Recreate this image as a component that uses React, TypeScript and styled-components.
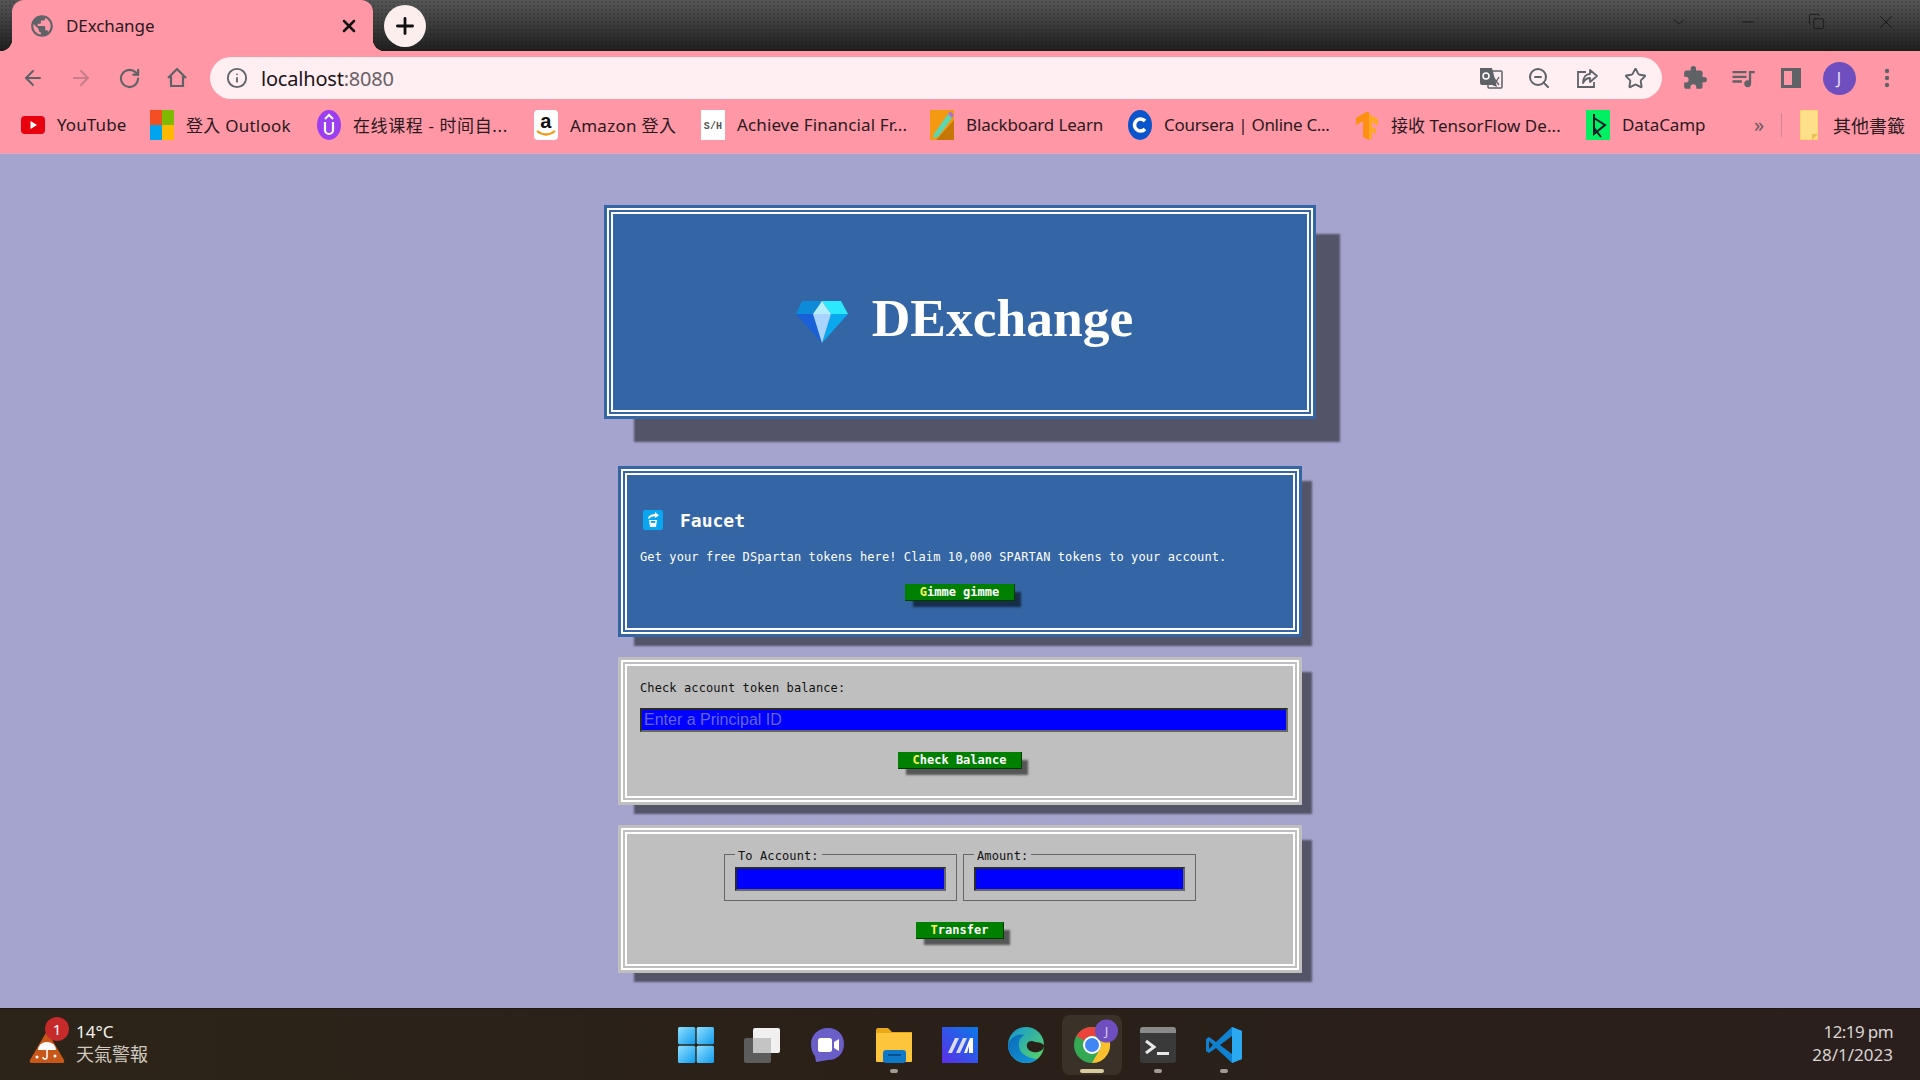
import React from "react";
import styled, { createGlobalStyle } from "styled-components";
import { ArrowLeft, ArrowRight, RotateCw, Info, ZoomOut, Star, X, Plus, ChevronDown, Minus, Copy } from "lucide-react";
import { MdExtension, MdQueueMusic, MdPublic } from "react-icons/md";

const PINK = "#ff97a6";
const UI_FONT = `"Noto Sans", "Noto Sans CJK TC", sans-serif`;
const MONO = `"DejaVu Sans Mono", "Liberation Mono", monospace`;

const Global = createGlobalStyle`
  html, body { margin: 0; padding: 0; height: 100%; overflow: hidden; background: #a5a4cf; }
  #root { height: 100%; }
  * { box-sizing: border-box; }
`;

const Screen = styled.div`
  width: 1920px;
  height: 1080px;
  display: flex;
  flex-direction: column;
  overflow: hidden;
  font-family: ${UI_FONT};
`;

const TitleBar = styled.header`
  height: 51px;
  flex: none;
  display: flex;
  align-items: flex-end;
  padding-left: 12px;
  background-color: #333;
  background-image: radial-gradient(rgba(0, 0, 0, 0.14) 1px, transparent 1px), linear-gradient(#565656, #1f1f1f);
  background-size: 4px 4px, 100% 100%;
`;

const Tab = styled.div`
  position: relative;
  width: 361px;
  height: 51px;
  display: flex;
  align-items: center;
  gap: 11px;
  padding: 0 14px 0 17px;
  background: ${PINK};
  border-radius: 12px 12px 0 0;
  color: #2a1a1e;
  font-size: 17px;
  letter-spacing: -0.1px;
  &::before, &::after {
    content: "";
    position: absolute;
    bottom: 0;
    width: 12px;
    height: 12px;
  }
  &::before { left: -12px; background: radial-gradient(circle at 0 0, transparent 12px, ${PINK} 12.5px); }
  &::after { right: -12px; background: radial-gradient(circle at 100% 0, transparent 12px, ${PINK} 12.5px); }
`;

const TabTitle = styled.span`
  flex: 1;
`;

const NewTab = styled.div`
  width: 42px;
  height: 42px;
  margin: 0 0 4px 11px;
  border-radius: 50%;
  background: #fdeeee;
  color: #111;
  display: flex;
  align-items: center;
  justify-content: center;
`;

const WindowControls = styled.div`
  margin-left: auto;
  align-self: stretch;
  display: flex;
  align-items: center;
  padding: 0 0 8px 0;
  color: #111;
`;

const WindowButton = styled.div`
  width: 69px;
  display: flex;
  justify-content: center;
`;

const Toolbar = styled.div`
  height: 48px;
  flex: none;
  display: flex;
  align-items: flex-start;
  padding: 6px 9px 0;
  background: ${PINK};
`;

const ToolIcon = styled.div<{ $faded?: boolean }>`
  width: 48px;
  height: 42px;
  flex: none;
  display: flex;
  align-items: center;
  justify-content: center;
  color: ${(p) => (p.$faded ? "#c87d8a" : "#5f6368")};
`;

const Omnibox = styled.div`
  flex: 1;
  height: 42px;
  margin: 0 9px;
  padding: 0 3px 0 16px;
  display: flex;
  align-items: center;
  border-radius: 21px;
  background: #ffeef2;
  color: #5f6368;
`;

const Url = styled.div`
  flex: 1;
  margin-left: 13px;
  font-size: 20px;
  letter-spacing: -0.2px;
  color: #6b6166;
  span { color: #1c1416; }
`;

const Avatar = styled.div`
  width: 33px;
  height: 33px;
  border-radius: 50%;
  background: #6f4fbf;
  color: #e8e0f8;
  font-size: 16px;
  display: flex;
  align-items: center;
  justify-content: center;
`;

const BookmarksBar = styled.nav`
  height: 55px;
  flex: none;
  display: flex;
  align-items: center;
  padding: 0 15px 3px 21px;
  background: ${PINK};
  border-bottom: 1px solid #e4a9c0;
`;

const Bookmark = styled.div<{ $w: number; $ls?: number }>`
  width: ${(p) => p.$w}px;
  flex: none;
  display: flex;
  align-items: center;
  gap: 12px;
  font-size: 17px;
  letter-spacing: ${(p) => p.$ls ?? 0}px;
  color: #2a1a1e;
  white-space: nowrap;
`;

const FolderBookmark = styled(Bookmark)`
  gap: 15px;
  font-size: 18px;
`;

const Overflow = styled.div`
  width: 34px;
  margin-left: 38px;
  color: #6b5a60;
  font-size: 20px;
`;

const Separator = styled.div`
  width: 1px;
  height: 24px;
  margin-right: 18px;
  background: #d08494;
`;

const Page = styled.main`
  flex: 1;
  display: flex;
  flex-direction: column;
  align-items: center;
  padding-top: 51px;
  background: #a5a4cf;
`;

const Card = styled.section<{ $gray?: boolean; $w: number; $sx: number }>`
  width: ${(p) => p.$w}px;
  padding: 3px;
  background: ${(p) => (p.$gray ? "#bfbfbf" : "#3465a4")};
  box-shadow: ${(p) => p.$sx}px ${(p) => p.$sx - 1}px 2px -3px #545469;
  & + & { margin-top: 20px; }
`;

const HeaderCard = styled(Card)`
  margin-bottom: 27px;
`;

const CardInner = styled.div`
  border: 6px double #fff;
  padding: 13px 13px 27px;
`;

const FaucetInner = styled(CardInner)`
  padding-top: 35px;
`;

const TransferInner = styled(CardInner)`
  padding-top: 11px;
  padding-bottom: 25px;
`;

const HeaderInner = styled.div`
  height: 208px;
  padding: 20px 0 0 9px;
  border: 6px double #fff;
  display: flex;
  align-items: center;
  justify-content: center;
  gap: 24px;
`;

const Logo = styled.h1`
  margin: 0 0 9px;
  font-family: "Liberation Serif", serif;
  font-weight: 700;
  font-size: 53.5px;
  line-height: 60px;
  color: #fff;
`;

const FaucetHeading = styled.h2`
  margin: 0 0 0 3px;
  height: 20px;
  display: flex;
  align-items: center;
  gap: 17px;
  font-family: ${MONO};
  font-size: 18px;
  font-weight: 700;
  color: #fff;
`;

const Line = styled.p<{ $light?: boolean }>`
  margin: 0;
  font-family: ${MONO};
  font-size: 12px;
  letter-spacing: 0.105px;
  line-height: 18px;
  color: ${(p) => (p.$light ? "#fff" : "#111")};
`;

const FaucetLine = styled(Line)`
  margin-top: 18px;
`;

const Actions = styled.div<{ $top: number }>`
  display: flex;
  justify-content: center;
  margin-top: ${(p) => p.$top}px;
`;

const GreenButton = styled.button`
  height: 17px;
  padding: 1px 15px 0;
  border: 0;
  border-right: 1px solid #003c00;
  border-bottom: 1px solid #003c00;
  background: #008000;
  color: #fff;
  font-family: ${MONO};
  font-size: 12px;
  font-weight: 700;
  line-height: 15px;
  box-shadow: 7px 7px 2px -1px rgba(0, 0, 0, 0.55);
  span { color: #ffff55; }
`;

const Field = styled.input<{ $wide?: boolean }>`
  display: block;
  width: ${(p) => (p.$wide ? "648px" : "211px")};
  height: 24px;
  margin-top: ${(p) => (p.$wide ? "11px" : "0")};
  padding: 0 2px;
  border: 2px solid;
  border-color: #2a2a2a #666 #666 #2a2a2a;
  background: #0000ff;
  color: #fff;
  font-family: "Liberation Sans", Arial, sans-serif;
  font-size: 16px;
  outline: none;
  &::placeholder { color: #6565dd; opacity: 1; }
`;

const FieldRow = styled.div`
  display: flex;
  justify-content: center;
  gap: 6px;
`;

const Group = styled.fieldset`
  width: 233px;
  margin: 0;
  padding: 4px 10px 9px;
  border: 1px solid #666;
`;

const Caption = styled.legend`
  margin-left: 0;
  padding: 4px 3px 0;
  font-family: ${MONO};
  font-size: 12px;
  letter-spacing: 0.105px;
  line-height: 14px;
  color: #111;
`;

const Taskbar = styled.footer`
  height: 72px;
  flex: none;
  display: grid;
  grid-template-columns: 1fr auto 1fr;
  align-items: center;
  background: linear-gradient(90deg, #2c2419, #2a2019 50%, #2a1f1c);
  border-top: 1px solid #1f1812;
`;

const Weather = styled.div`
  display: flex;
  align-items: center;
  gap: 11px;
  padding-left: 29px;
`;

const WeatherIcon = styled.div`
  position: relative;
  width: 36px;
  height: 34px;
  margin-top: 4px;
`;

const Badge = styled.div`
  position: absolute;
  top: -13px;
  left: 16px;
  width: 24px;
  height: 24px;
  border-radius: 50%;
  background: #c62a2a;
  color: #fff;
  font-size: 15px;
  line-height: 24px;
  text-align: center;
`;

const WeatherText = styled.div`
  margin-top: -4px;
  font-size: 17px;
  line-height: 23px;
  color: #f2f0ec;
  small { display: block; font-size: 18px; color: #cfc9c0; }
`;

const Dock = styled.div`
  display: flex;
  align-items: center;
`;

const DockSlot = styled.div<{ $active?: boolean }>`
  position: relative;
  width: 66px;
  height: 60px;
  display: flex;
  align-items: center;
  justify-content: center;
  border-left: 3px solid transparent;
  border-right: 3px solid transparent;
  border-radius: 9px;
  background: ${(p) => (p.$active ? "#3a3128" : "transparent")};
  background-clip: padding-box;
`;

const Dot = styled.i<{ $wide?: boolean }>`
  position: absolute;
  bottom: 2px;
  left: 50%;
  width: ${(p) => (p.$wide ? "24px" : "8px")};
  height: 4px;
  margin-left: ${(p) => (p.$wide ? "-12px" : "-4px")};
  border-radius: 2px;
  background: ${(p) => (p.$wide ? "#d8cba0" : "#a09a92")};
`;

const Clock = styled.div`
  justify-self: end;
  margin-top: -4px;
  padding-right: 27px;
  text-align: right;
  font-size: 17px;
  line-height: 23px;
  color: #d8d5d2;
  span { letter-spacing: -0.6px; }
`;

const Diamond = () => (
  <svg width="52" height="42" viewBox="0 0 52 42">
    <polygon points="6,0 26,0 17,13 0,13" fill="#0d8ad8" />
    <polygon points="26,0 45,0 52,13 35,13" fill="#2be8ff" />
    <polygon points="0,13 17,13 26,42" fill="#1a60d8" />
    <polygon points="52,13 35,13 26,42" fill="#0aa8ee" />
    <polygon points="26,0 35,13 17,13" fill="#b4eeff" />
    <polygon points="17,13 35,13 26,42" fill="#a8d4ff" />
  </svg>
);

const FaucetIcon = () => (
  <svg width="20" height="20" viewBox="0 0 20 20">
    <rect width="20" height="20" rx="2" fill="#0aa6ef" />
    <path d="M5 8 C6 5 9 4 12 4 L12 2 L16 5.5 L12 8 L12 6.5 C9 6.5 7 7 6 9 Z" fill="#fff" />
    <path d="M6 10 L14 10 L13 17 L7 17 Z" fill="#fff" />
    <path d="M7.5 11 L12.5 11 L12 13 L8 13 Z" fill="#0aa6ef" />
  </svg>
);

const HomeIcon = () => (
  <svg width="24" height="24" viewBox="0 0 24 24" fill="none" stroke="currentColor" strokeWidth="2.2">
    <path d="M3 12 L12 3 L21 12 M6 10 V20 H18 V10" strokeLinejoin="miter" />
  </svg>
);

const TranslateIcon = () => (
  <svg width="24" height="24" viewBox="0 0 24 24">
    <rect x="9" y="5" width="14" height="17" rx="1" fill="none" stroke="#5f6368" strokeWidth="1.5" />
    <path d="M1 2 H13 L18 21 L13 19 H3 a2 2 0 0 1 -2 -2 Z" fill="#5f6368" />
    <circle cx="7" cy="10" r="3" fill="none" stroke="#fff" strokeWidth="1.5" />
    <path d="M14 11 L20 19 M20 11 L15 19" stroke="#5f6368" strokeWidth="1.4" />
  </svg>
);

const ShareIcon = () => (
  <svg width="24" height="24" viewBox="0 0 24 24" fill="none" stroke="currentColor" strokeWidth="1.8">
    <path d="M11 6 H3 V21 H19 V16" />
    <path d="M8 17 C8 11 11 8 15 8 V4 L22 10 L15 16 V12 C12 12 10 13 8 17 Z" strokeLinejoin="round" />
  </svg>
);

const SidebarIcon = () => (
  <svg width="22" height="22" viewBox="0 0 22 22">
    <path fillRule="evenodd" d="M1 1 H21 V21 H1 Z M4 4 V18 H12 V4 Z" fill="#5f6368" />
  </svg>
);

const MenuIcon = () => (
  <svg width="24" height="24" viewBox="0 0 24 24" fill="#5f6368">
    <circle cx="12" cy="5" r="2.2" />
    <circle cx="12" cy="12" r="2.2" />
    <circle cx="12" cy="19" r="2.2" />
  </svg>
);

const YouTubeIcon = () => (
  <svg width="24" height="24" viewBox="0 0 24 24">
    <rect y="3" width="24" height="18" rx="4" fill="#e8000f" />
    <polygon points="9.5,8 16,12 9.5,16" fill="#fff" />
  </svg>
);

const MicrosoftIcon = () => (
  <svg width="24" height="30" viewBox="0 0 24 30">
    <rect width="12" height="15" fill="#f25022" />
    <rect x="12" width="12" height="15" fill="#7fba00" />
    <rect y="15" width="12" height="15" fill="#00a4ef" />
    <rect x="12" y="15" width="12" height="15" fill="#ffb900" />
  </svg>
);

const UdacityIcon = () => (
  <svg width="24" height="30" viewBox="0 0 24 30">
    <ellipse cx="12" cy="15" rx="12" ry="15" fill="#9b3ff0" />
    <path d="M8 12 V20 a4 4 0 0 0 8 0 V12" fill="none" stroke="#fff" strokeWidth="2.2" />
    <path d="M8 9 L12 5 L16 9" fill="none" stroke="#fff" strokeWidth="2" />
  </svg>
);

const AmazonIcon = () => (
  <svg width="24" height="30" viewBox="0 0 24 30">
    <rect width="24" height="30" rx="4" fill="#fff" />
    <text x="12" y="18" textAnchor="middle" fontFamily="Liberation Sans" fontWeight="700" fontSize="20" fill="#111">a</text>
    <path d="M3 21 Q12 28 21 21" fill="none" stroke="#f39a12" strokeWidth="2.2" />
  </svg>
);

const SHIcon = () => (
  <svg width="24" height="30" viewBox="0 0 24 30">
    <rect width="24" height="30" fill="#fff" />
    <text x="12" y="19" textAnchor="middle" fontFamily="Liberation Mono" fontSize="10" fontWeight="700" fill="#555">S/H</text>
  </svg>
);

const BlackboardIcon = () => (
  <svg width="24" height="30" viewBox="0 0 24 30">
    <rect width="24" height="30" fill="#f39a12" />
    <polygon points="24,10 24,30 6,30" fill="#c77708" />
    <polygon points="4,24 18,4 22,8 8,27 3,28" fill="#5cd6b0" />
    <polygon points="18,4 20,1 24,5 22,8" fill="#b070d0" />
  </svg>
);

const CourseraIcon = () => (
  <svg width="24" height="30" viewBox="0 0 24 30">
    <ellipse cx="12" cy="15" rx="12" ry="15" fill="#0b55cc" />
    <path d="M17 11 a6 6 0 1 0 0 8" fill="none" stroke="#fff" strokeWidth="3.6" />
  </svg>
);

const TensorFlowIcon = () => (
  <svg width="24" height="30" viewBox="0 0 24 30">
    <polygon points="11,2 1,8 1,15 8,11 8,27 14,30 14,2" fill="#ff8f12" />
    <polygon points="14,4 23,9 23,16 17,12 17,17 21,19 21,24 17,22 17,28 14,30" fill="#ffa726" />
  </svg>
);

const DataCampIcon = () => (
  <svg width="24" height="30" viewBox="0 0 24 30">
    <rect width="24" height="30" fill="#03ef62" />
    <path d="M8 4 V24 L19 15 L8 8 M8 18 L15 27" fill="none" stroke="#05192d" strokeWidth="2" />
  </svg>
);

const FolderIcon = () => (
  <svg width="18" height="30" viewBox="0 0 18 30">
    <rect width="18" height="30" rx="1" fill="#ffe08a" stroke="#f5cc50" />
    <path d="M12 30 L18 24 H12 Z" fill="#e8c050" />
  </svg>
);

const WeatherTriangle = () => (
  <svg width="36" height="34" viewBox="0 0 36 34">
    <path d="M18 1 L35 30 a2 2 0 0 1 -2 3 H3 a2 2 0 0 1 -2 -3 Z" fill="#c8581a" />
    <path d="M9 20 a9 8 0 0 1 18 0 Z" fill="#fff" />
    <path d="M18 20 V27 a2 2 0 0 1 -4 0" fill="none" stroke="#fff" strokeWidth="1.5" />
    <circle cx="8" cy="27" r="1.5" fill="#fff" />
    <circle cx="26" cy="26" r="1.5" fill="#fff" />
  </svg>
);

const WindowsLogo = () => (
  <svg width="36" height="36" viewBox="0 0 36 36">
    <defs>
      <linearGradient id="win" x1="0" y1="0" x2="1" y2="1">
        <stop offset="0" stopColor="#8fe0ff" />
        <stop offset="1" stopColor="#0f9cec" />
      </linearGradient>
    </defs>
    <rect width="17.3" height="17.3" rx="1.5" fill="url(#win)" />
    <rect x="18.7" width="17.3" height="17.3" rx="1.5" fill="url(#win)" />
    <rect y="18.7" width="17.3" height="17.3" rx="1.5" fill="url(#win)" />
    <rect x="18.7" y="18.7" width="17.3" height="17.3" rx="1.5" fill="url(#win)" />
  </svg>
);

const TaskViewIcon = () => (
  <svg width="36" height="36" viewBox="0 0 36 36">
    <rect x="9" y="1" width="27" height="25" rx="2" fill="#f0f0f0" />
    <rect y="11" width="27" height="25" rx="2" fill="#5c5c5c" />
    <rect x="9" y="11" width="18" height="15" fill="#c4c4c4" />
  </svg>
);

const ChatIcon = () => (
  <svg width="36" height="36" viewBox="0 0 36 36">
    <path d="M18 1 C28 1 34 8 34 17 C34 27 27 33 18 33 L6 35 L5 29 C2 26 1 21 1 17 C1 8 8 1 18 1 Z" fill="#6a5fc8" />
    <rect x="8" y="11" width="14" height="14" rx="2.5" fill="#fff" />
    <path d="M24 15 L29 12 V24 L24 21 Z" fill="#fff" />
  </svg>
);

const ExplorerIcon = () => (
  <svg width="36" height="36" viewBox="0 0 36 36">
    <path d="M0 3 a2 2 0 0 1 2 -2 H12 L16 5 H36 V34 H0 Z" fill="#e8a818" />
    <rect y="6" width="36" height="29" rx="1" fill="#fcc53c" />
    <rect x="7" y="23" width="23" height="13" rx="3" fill="#0f78c8" />
    <rect x="12" y="27" width="13" height="2" fill="#0a4f8f" />
  </svg>
);

const MatlabIcon = () => (
  <svg width="36" height="36" viewBox="0 0 36 36">
    <defs>
      <linearGradient id="mat" x1="0" y1="1" x2="1" y2="0">
        <stop offset="0" stopColor="#5b2ee8" />
        <stop offset="1" stopColor="#0a7ae8" />
      </linearGradient>
    </defs>
    <rect width="36" height="36" fill="url(#mat)" />
    <polygon points="6,26 13,11 17,11 10,26" fill="#dcdcff" />
    <polygon points="14,26 21,11 25,11 18,26" fill="#dcdcff" />
    <polygon points="22,26 28,11 31,11 31,26 27,26 27,19 25,26" fill="#fff" />
  </svg>
);

const EdgeIcon = () => (
  <svg width="36" height="36" viewBox="0 0 36 36">
    <defs>
      <linearGradient id="edgeA" x1="0" y1="0" x2="1" y2="1">
        <stop offset="0" stopColor="#0c6bb8" />
        <stop offset="1" stopColor="#1296d8" />
      </linearGradient>
      <linearGradient id="edgeB" x1="0" y1="0" x2="1" y2="1">
        <stop offset="0" stopColor="#1296d8" />
        <stop offset="1" stopColor="#5fd85c" />
      </linearGradient>
    </defs>
    <circle cx="18" cy="18" r="18" fill="url(#edgeB)" />
    <path d="M18 36 A18 18 0 0 1 0 18 C2 10 10 6 17 8 C12 10 10 14 11 20 C12 27 20 31 29 32 C26 35 22 36 18 36 Z" fill="url(#edgeA)" />
    <path d="M36 18 C36 24 30 26 25 25 C21 24 18 21 19 17 C20 14 24 13 27 15 C31 15 34 16 36 18 Z" fill="#2a2019" />
  </svg>
);

const ChromeIcon = () => (
  <svg width="52" height="52" viewBox="0 0 52 52">
    <g transform="translate(8 8)">
      <circle cx="18" cy="18" r="18" fill="#34a853" />
      <path d="M18 0 A18 18 0 0 1 33.6 9 H18 A9 9 0 0 0 10 13.5 L2.4 9 A18 18 0 0 1 18 0 Z" fill="#e9433b" />
      <path d="M33.6 9 A18 18 0 0 1 18 36 L26 22 A9 9 0 0 0 26 13 Z" fill="#fbc02d" />
      <circle cx="18" cy="18" r="9" fill="#fff" />
      <circle cx="18" cy="18" r="7" fill="#4285f4" />
    </g>
    <circle cx="40.5" cy="12" r="11.5" fill="#6f4fbf" />
    <text x="40.5" y="17" textAnchor="middle" fontFamily="Noto Sans" fontSize="13" fill="#d8cdf0">J</text>
  </svg>
);

const TerminalIcon = () => (
  <svg width="36" height="36" viewBox="0 0 36 36">
    <rect width="36" height="36" rx="3" fill="#3a3a3a" />
    <path d="M0 3 a3 3 0 0 1 3 -3 H33 a3 3 0 0 1 3 3 V6 H0 Z" fill="#8a8a8a" />
    <path d="M6 14 L14 20 L6 26" fill="none" stroke="#e8e8e8" strokeWidth="3" />
    <rect x="17" y="25" width="12" height="3" fill="#e8e8e8" />
  </svg>
);

const VSCodeIcon = () => (
  <svg width="36" height="36" viewBox="0 0 36 36">
    <path d="M26 0 L36 4 V32 L26 36 L10 21 L3 26 L0 24 V12 L3 10 L10 15 Z" fill="#0e82d0" />
    <path d="M26 0 L36 4 V32 L26 36 Z" fill="#2aa8f0" />
    <path d="M26 9 V27 L14 18 Z" fill="#2a2019" />
    <path d="M3 14 L7 18 L3 22 Z" fill="#2a2019" />
  </svg>
);

const bookmarks = [
  { w: 129, ls: 0.1, icon: <YouTubeIcon />, label: "YouTube" },
  { w: 167, ls: 0.25, icon: <MicrosoftIcon />, label: "登入 Outlook" },
  { w: 217, ls: 0.6, icon: <UdacityIcon />, label: "在线课程 - 时间自..." },
  { w: 167, ls: 0.3, icon: <AmazonIcon />, label: "Amazon 登入" },
  { w: 229, ls: 0.13, icon: <SHIcon />, label: "Achieve Financial Fr..." },
  { w: 198, ls: -0.15, icon: <BlackboardIcon />, label: "Blackboard Learn" },
  { w: 227, ls: -0.3, icon: <CourseraIcon />, label: "Coursera | Online C..." },
  { w: 231, ls: 0.05, icon: <TensorFlowIcon />, label: "接收 TensorFlow De..." },
  { w: 130, ls: -0.1, icon: <DataCampIcon />, label: "DataCamp" },
];

const dock = [
  { key: "win", icon: <WindowsLogo /> },
  { key: "task", icon: <TaskViewIcon /> },
  { key: "chat", icon: <ChatIcon /> },
  { key: "files", icon: <ExplorerIcon />, dot: true },
  { key: "matlab", icon: <MatlabIcon /> },
  { key: "edge", icon: <EdgeIcon /> },
  { key: "chrome", icon: <ChromeIcon />, active: true },
  { key: "term", icon: <TerminalIcon />, dot: true },
  { key: "code", icon: <VSCodeIcon />, dot: true },
];

const Press = ({ children }: { children: string }) => (
  <GreenButton>
    <span>{children[0]}</span>
    {children.slice(1)}
  </GreenButton>
);

export default function App() {
  return (
    <Screen>
      <Global />
      <TitleBar>
        <Tab>
          <MdPublic size={26} color="#5f6368" />
          <TabTitle>DExchange</TabTitle>
          <X size={20} strokeWidth={3} color="#111" />
        </Tab>
        <NewTab>
          <Plus size={26} strokeWidth={2.6} />
        </NewTab>
        <WindowControls>
          <WindowButton><ChevronDown size={18} strokeWidth={1} /></WindowButton>
          <WindowButton><Minus size={18} strokeWidth={1} /></WindowButton>
          <WindowButton><Copy size={17} strokeWidth={1} /></WindowButton>
          <WindowButton><X size={22} strokeWidth={1} /></WindowButton>
        </WindowControls>
      </TitleBar>
      <Toolbar>
        <ToolIcon><ArrowLeft size={24} strokeWidth={2} /></ToolIcon>
        <ToolIcon $faded><ArrowRight size={24} strokeWidth={2} /></ToolIcon>
        <ToolIcon><RotateCw size={23} strokeWidth={2.2} /></ToolIcon>
        <ToolIcon><HomeIcon /></ToolIcon>
        <Omnibox>
          <Info size={22} strokeWidth={2} />
          <Url><span>localhost</span>:8080</Url>
          <ToolIcon><TranslateIcon /></ToolIcon>
          <ToolIcon><ZoomOut size={24} strokeWidth={2} /></ToolIcon>
          <ToolIcon><ShareIcon /></ToolIcon>
          <ToolIcon><Star size={23} strokeWidth={2} /></ToolIcon>
        </Omnibox>
        <ToolIcon><MdExtension size={26} /></ToolIcon>
        <ToolIcon><MdQueueMusic size={28} /></ToolIcon>
        <ToolIcon><SidebarIcon /></ToolIcon>
        <ToolIcon><Avatar>J</Avatar></ToolIcon>
        <ToolIcon><MenuIcon /></ToolIcon>
      </Toolbar>
      <BookmarksBar>
        {bookmarks.map((b) => (
          <Bookmark key={b.label} $w={b.w} $ls={b.ls}>
            {b.icon}
            <span>{b.label}</span>
          </Bookmark>
        ))}
        <Overflow>»</Overflow>
        <Separator />
        <FolderBookmark $w={105}>
          <FolderIcon />
          <span>其他書籤</span>
        </FolderBookmark>
      </BookmarksBar>
      <Page>
        <HeaderCard $w={712} $sx={27}>
          <HeaderInner>
            <Diamond />
            <Logo>DExchange</Logo>
          </HeaderInner>
        </HeaderCard>
        <Card $w={684} $sx={13}>
          <FaucetInner>
            <FaucetHeading>
              <FaucetIcon />
              Faucet
            </FaucetHeading>
            <FaucetLine $light>
              Get your free DSpartan tokens here! Claim 10,000 SPARTAN tokens to your account.
            </FaucetLine>
            <Actions $top={18}>
              <Press>Gimme gimme</Press>
            </Actions>
          </FaucetInner>
        </Card>
        <Card $w={684} $sx={13} $gray>
          <CardInner>
            <Line>Check account token balance:</Line>
            <Field $wide placeholder="Enter a Principal ID" />
            <Actions $top={20}>
              <Press>Check Balance</Press>
            </Actions>
          </CardInner>
        </Card>
        <Card $w={684} $sx={13} $gray>
          <TransferInner>
            <FieldRow>
              <Group>
                <Caption>To Account:</Caption>
                <Field />
              </Group>
              <Group>
                <Caption>Amount:</Caption>
                <Field />
              </Group>
            </FieldRow>
            <Actions $top={21}>
              <Press>Transfer</Press>
            </Actions>
          </TransferInner>
        </Card>
      </Page>
      <Taskbar>
        <Weather>
          <WeatherIcon>
            <WeatherTriangle />
            <Badge>1</Badge>
          </WeatherIcon>
          <WeatherText>
            14°C
            <small>天氣警報</small>
          </WeatherText>
        </Weather>
        <Dock>
          {dock.map((d) => (
            <DockSlot key={d.key} $active={d.active}>
              {d.icon}
              {(d.dot || d.active) && <Dot $wide={d.active} />}
            </DockSlot>
          ))}
        </Dock>
        <Clock>
          <span>12:19 pm</span>
          <br />
          28/1/2023
        </Clock>
      </Taskbar>
    </Screen>
  );
}
